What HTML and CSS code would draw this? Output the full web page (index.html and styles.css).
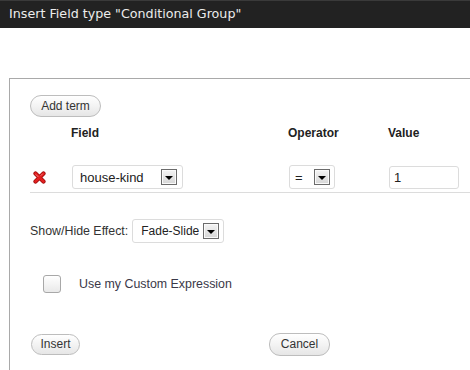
FILE: index.html
```html
<!DOCTYPE html>
<html>
<head>
<meta charset="utf-8">
<link rel="stylesheet" href="styles.css">
</head>
<body>
<div class="titlebar">Insert Field type "Conditional Group"</div>
<div class="frame">
  <button class="btn add">Add term</button>
  <div class="terms">
    <div class="thead">
      <span></span><span>Field</span><span>Operator</span><span>Value</span>
    </div>
    <div class="trow">
      <span class="del">
        <svg width="13" height="13" viewBox="0 0 13 13">
          <path d="M2.5 2.5 L10.5 10.5 M10.5 2.5 L2.5 10.5" stroke="#9b0a0a" stroke-width="4.2" stroke-linecap="round"/>
          <path d="M2.5 2.5 L10.5 10.5 M10.5 2.5 L2.5 10.5" stroke="#e32020" stroke-width="2.6" stroke-linecap="round"/>
          <path d="M3 3.6 L5 5.6 M9.4 3 L8 4.4" stroke="#f47a7a" stroke-width="1" stroke-linecap="round"/>
        </svg>
      </span>
      <div class="sel sel-field"><span class="sel-text">house-kind</span><span class="arrow"></span></div>
      <div class="sel sel-op"><span class="sel-text">=</span><span class="arrow"></span></div>
      <div class="input">1</div>
    </div>
  </div>
  <div class="effect">
    <span class="label">Show/Hide Effect:</span>
    <div class="sel sel-effect"><span class="sel-text">Fade-Slide</span><span class="arrow"></span></div>
  </div>
  <div class="custom">
    <span class="checkbox"></span>
    <span class="custom-label">Use my Custom Expression</span>
  </div>
  <div class="actions">
    <button class="btn insert">Insert</button>
    <button class="btn cancel">Cancel</button>
  </div>
</div>
</body>
</html>
```
FILE: styles.css
```css
* { box-sizing: border-box; }
html, body { margin: 0; padding: 0; background: #fff; }
body {
  width: 470px;
  height: 370px;
  overflow: hidden;
  font-family: "Liberation Sans", Arial, sans-serif;
  font-size: 12px;
  color: #333;
}
.titlebar {
  height: 28px;
  background: #222;
  border-top: 1px solid #3a3a3a;
  color: #ececec;
  font-family: "DejaVu Sans", Verdana, sans-serif;
  font-size: 12.7px;
  line-height: 26px;
  padding-left: 9px;
  white-space: nowrap;
}
.frame {
  margin-top: 50px;
  margin-left: 9px;
  border-top: 1px solid #a9a9a9;
  border-left: 1px solid #a9a9a9;
  padding: 16px 0 14px 20px;
}
.btn {
  display: block;
  height: 22px;
  border: 1px solid #bdbdbd;
  border-radius: 11px;
  background: linear-gradient(#ffffff, #f3f3f3 50%, #e6e6e6);
  color: #333;
  font-family: "Liberation Sans", Arial, sans-serif;
  font-size: 12px;
  padding: 0 10px;
  line-height: 20px;
}
.add { width: 71px; padding: 0; }
.terms { margin-top: 8px; }
.thead, .trow {
  display: grid;
  grid-template-columns: 41px 217px 100px 1fr;
}
.thead {
  font-weight: bold;
  color: #222;
  line-height: 16px;
  height: 16px;
  margin-top: 1px;
}
.trow {
  margin-top: 24px;
  padding-bottom: 3px;
  border-bottom: 1px solid #dcdcdc;
  align-items: center;
}
.del { display: flex; padding-left: 3px; padding-top: 1px; }
.sel {
  display: flex;
  align-items: center;
  height: 24px;
  border: 1px solid #dcdcdc;
  border-radius: 3px;
  background: #fff;
  font-size: 13px;
  color: #222;
  margin-left: 1px;
}
.sel-text { flex: 1; padding-left: 7px; white-space: nowrap; }
.arrow {
  flex: none;
  width: 16px;
  height: 16px;
  margin-right: 4px;
  border: 1px solid #6b6b6b;
  background: linear-gradient(#f4f4f4, #d6d6d6);
  box-shadow: inset 0 0 0 1px #fafafa;
  position: relative;
}
.arrow::after {
  content: "";
  position: absolute;
  left: 3px;
  top: 6px;
  border-left: 4px solid transparent;
  border-right: 4px solid transparent;
  border-top: 4px solid #000;
}
.sel-field { width: 111px; }
.sel-field .arrow { margin-right: 5px; }
.sel-op { width: 46px; }
.sel-op .sel-text { padding-left: 5px; }
.input {
  width: 70px;
  height: 23px;
  margin-left: 1px;
  border: 1px solid #dcdcdc;
  border-radius: 3px;
  font-size: 13px;
  color: #222;
  line-height: 21px;
  padding-left: 4px;
}
.effect {
  display: flex;
  align-items: center;
  margin-top: 26px;
  height: 24px;
}
.label { color: #333; margin-right: 4px; font-size: 12.4px; }
.sel-effect { width: 92px; margin-left: 0; font-size: 12px; }
.sel-effect .sel-text { padding-left: 8px; }
.custom {
  display: flex;
  align-items: center;
  margin-top: 32px;
  height: 18px;
}
.checkbox {
  width: 18px;
  height: 18px;
  margin-left: 13px;
  border: 1px solid #a8a8a8;
  border-radius: 3px;
  background: linear-gradient(#ffffff, #e9e9e9);
}
.custom-label { margin-left: 18px; color: #3a3848; font-size: 12.4px; }
.actions {
  display: flex;
  align-items: center;
  margin-top: 40px;
}
.insert { width: 49px; height: 21px; padding: 0; margin-left: 1px; line-height: 19px; }
.cancel { width: 61px; height: 23px; padding: 0; margin-left: 189px; line-height: 21px; }
```
